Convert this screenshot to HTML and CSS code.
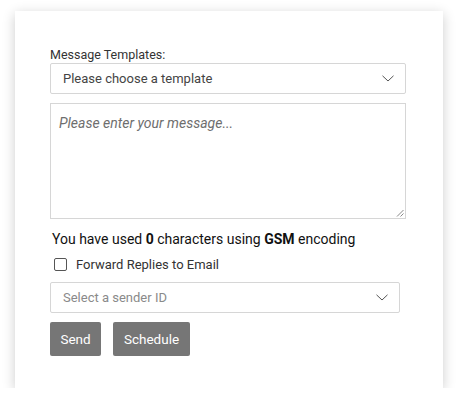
FILE: index.html
```html
<!DOCTYPE html>
<html>
<head>
<meta charset="utf-8">
<link rel="stylesheet" href="styles.css">
</head>
<body>
<div class="card">
  <div class="label">Message Templates:</div>
  <div class="select select-wide">
    <span class="select-text">Please choose a template</span>
    <svg class="chev" width="12" height="7" viewBox="0 0 12 7"><path d="M0.5 0.8 L6 6 L11.5 0.8" fill="none" stroke="#555" stroke-width="1"/></svg>
  </div>
  <div class="textarea">
    <span class="placeholder">Please enter your message...</span>
    <svg class="grip" width="8" height="8" viewBox="0 0 8 8"><path d="M7.5 1 L1 7.5 M7.5 4.5 L4.5 7.5" stroke="#888" stroke-width="1"/></svg>
  </div>
  <div class="count">You have used <b>0</b> characters using <b>GSM</b> encoding</div>
  <div class="check-row">
    <span class="checkbox"></span>
    <span class="check-label">Forward Replies to Email</span>
  </div>
  <div class="select select-narrow">
    <span class="select-text muted">Select a sender ID</span>
    <svg class="chev" width="12" height="7" viewBox="0 0 12 7"><path d="M0.5 0.8 L6 6 L11.5 0.8" fill="none" stroke="#555" stroke-width="1"/></svg>
  </div>
  <div class="buttons">
    <button class="btn btn-send">Send</button>
    <button class="btn btn-schedule">Schedule</button>
  </div>
</div>
</body>
</html>
```
FILE: styles.css
```css
html, body {
  margin: 0;
  padding: 0;
  background: #fff;
}
body {
  padding: 11px 0 0 15px;
  font-family: Roboto, "Liberation Sans", sans-serif;
}
.card {
  box-sizing: border-box;
  width: 428px;
  height: 377px;
  background: #fff;
  box-shadow: 0 3px 12px rgba(0, 0, 0, 0.2);
  padding: 36px 0 0 35px;
  display: flex;
  flex-direction: column;
  align-items: flex-start;
}
.label {
  font-size: 12.5px;
  line-height: 16px;
  color: #333;
}
.select {
  box-sizing: border-box;
  height: 31px;
  border: 1px solid #d6d6d6;
  border-radius: 2px;
  display: flex;
  align-items: center;
  justify-content: space-between;
  padding: 0 11px 0 12px;
}
.select-wide { width: 356px; }
.select-narrow { width: 350px; margin-top: 9px; }
.select-text {
  font-size: 13px;
  color: #444;
}
.select-text.muted { color: #8a8a8a; }
.chev { display: block; }
.textarea {
  box-sizing: border-box;
  position: relative;
  margin-top: 9px;
  width: 356px;
  height: 116px;
  border: 1px solid #d6d6d6;
  padding: 9px 8px;
}
.placeholder {
  font-size: 14px;
  font-style: italic;
  color: #6e6e6e;
}
.grip {
  position: absolute;
  right: 1px;
  bottom: 1px;
}
.count {
  margin-top: 10px;
  margin-left: 2px;
  font-size: 14px;
  line-height: 20px;
  color: #111;
}
.count b { font-weight: 700; }
.check-row {
  margin-top: 7px;
  margin-left: 4px;
  display: flex;
  align-items: center;
  height: 17px;
}
.checkbox {
  box-sizing: border-box;
  width: 13px;
  height: 13px;
  border: 1px solid #555;
  border-radius: 2px;
  background: #fff;
}
.check-label {
  margin-left: 9px;
  font-size: 13px;
  color: #333;
}
.buttons {
  margin-top: 9px;
  display: flex;
  gap: 12px;
}
.btn {
  height: 34px;
  border: none;
  border-radius: 2px;
  background: #767676;
  color: #fff;
  font-family: inherit;
  font-size: 13.5px;
  padding: 0 10px;
}
.btn-send { width: 51px; }
.btn-schedule { width: 77px; }
```
